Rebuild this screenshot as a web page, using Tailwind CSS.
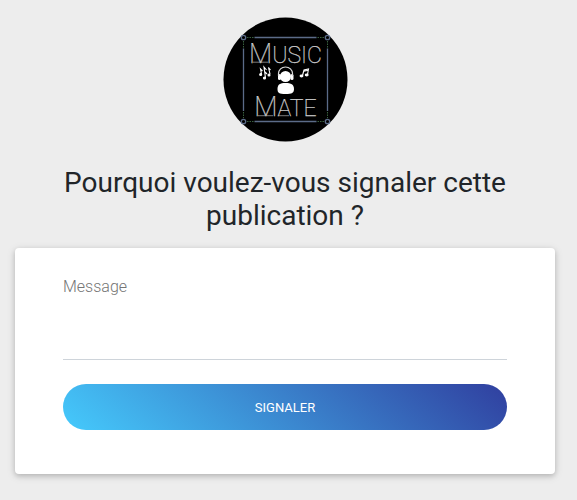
<!DOCTYPE html>
<html lang="fr">
<head>
<meta charset="utf-8">
<meta name="viewport" content="width=device-width, initial-scale=1">
<title>Music Mate – Signaler</title>
<script src="https://cdn.jsdelivr.net/npm/@tailwindcss/browser@4"></script>
</head>
<body class="min-h-screen bg-[#ededed] font-['Roboto',sans-serif] text-[#212529]">
<main class="flex flex-col items-center pt-[17px] pr-[22px] pb-6 pl-[15px]">
  <svg class="size-[125px]" viewBox="0 0 125 125" role="img" aria-label="Music Mate">
    <circle cx="62.5" cy="62.5" r="62" fill="#000"/>
    <g fill="none" stroke="#5b6b88" stroke-width="1.3">
      <path d="M31.500 20.500H93.500M31.500 104.500H93.500M20.500 31.500V94M104.500 31.500V94"/>
      <circle cx="20.500" cy="20.500" r="2.200"/><circle cx="104.500" cy="20.500" r="2.200"/>
      <circle cx="20.500" cy="104.500" r="2.200"/><circle cx="104.500" cy="104.500" r="2.200"/>
    </g>
    <path d="M24 20.500H31M94.500 20.500H101M24 104.500H31M94.500 104.500H101M20.500 24V31M20.500 95V101M104.500 24V31M104.500 95V101" fill="none" stroke="#39603f" stroke-width="1" stroke-dasharray="1.500 1"/>
    <g class="opacity-80" fill="#fff" stroke="#fff" stroke-width=".25" font-family="Roboto, sans-serif" font-weight="100" text-anchor="middle">
      <text x="62.500" y="45.500" font-size="23"><tspan font-size="27">M</tspan>USIC</text>
      <text x="62.500" y="99" font-size="23"><tspan font-size="27">M</tspan>ATE</text>
      <path d="M30 45.200H45M35 98.700H50M55 98.700H66" fill="none" stroke-width=".6"/>
    </g>
    <g fill="#fff">
      <circle cx="62.500" cy="59.500" r="5.500"/>
      <path d="M54.500 72C54.500 67.500 57 66 62.500 66S71 67.500 71 72C71 76 69 77 62.500 77S54.500 76 54.500 72Z"/>
      <rect x="55" y="57" width="3" height="6" rx="1.500"/><rect x="67.500" y="57" width="3" height="6" rx="1.500"/>
    </g>
    <path d="M55.500 59V56.500a7 6.500 0 0 1 14 0v2.500" fill="none" stroke="#ddd" stroke-width="1.200"/>
    <g fill="#fff" stroke="#fff" stroke-width="1.100">
      <path d="M79.500 58.500L81 53L85.500 52L84.500 57.500M80.800 54.200L85.300 53.200" fill="none"/>
      <ellipse cx="78.500" cy="59" rx="1.400" ry=".9"/><ellipse cx="83.700" cy="58" rx="1.400" ry=".9"/>
      <path d="M38.500 57L37.500 52L39.500 54M42.500 61L41 50L43.500 53M42 55L44 57M47 57L45.500 50.500L47.500 53" fill="none"/>
      <circle cx="37.700" cy="57.500" r="1"/><circle cx="41.500" cy="61" r="1"/><circle cx="46" cy="58" r="1"/>
    </g>
  </svg>
  <h1 class="mt-6 mb-4 text-center text-[28px] leading-[33px]">Pourquoi voulez-vous signaler cette publication ?</h1>
  <form class="w-full rounded bg-white px-12 pt-6 pb-11 shadow-[0_2px_5px_rgba(0,0,0,0.16),0_2px_10px_rgba(0,0,0,0.12)]">
    <label for="message" class="block text-base leading-[30px] font-light text-[#757575]">Message</label>
    <textarea id="message" name="message" class="block h-[58px] w-full resize-none border-b border-[#ced4da] text-base font-light outline-none"></textarea>
    <button type="submit" class="mt-6 block h-[46px] w-full rounded-full bg-[linear-gradient(40deg,#45cafc,#303f9f)] pt-px text-[13px] font-normal text-white uppercase">Signaler</button>
  </form>
</main>
</body>
</html>
